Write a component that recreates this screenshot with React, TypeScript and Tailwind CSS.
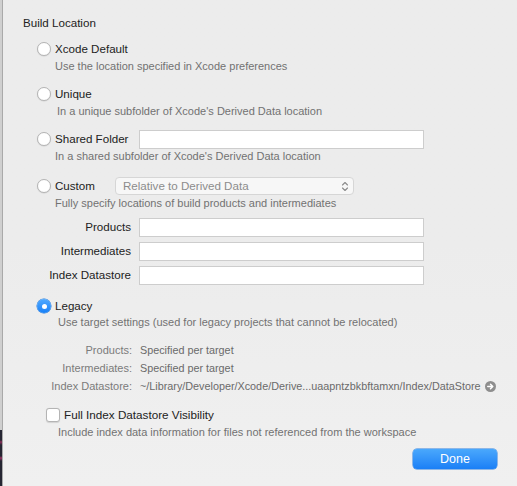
import React from 'react';

const font = { fontFamily: '"Liberation Sans", Arial, sans-serif' };

const Radio = ({ checked = false }: { checked?: boolean }) =>
  checked ? (
    <span className="flex h-[14px] w-[14px] shrink-0 items-center justify-center rounded-full bg-gradient-to-b from-[#4fa9ff] to-[#1580f7] shadow-[0_0_0_0.5px_#1a73d9]">
      <span className="h-[5px] w-[5px] rounded-full bg-white" />
    </span>
  ) : (
    <span className="h-[14px] w-[14px] shrink-0 rounded-full border border-[#b4b4b4] bg-white shadow-[0_0.5px_1px_rgba(0,0,0,0.12)]" />
  );

const Field = () => (
  <div className="h-[19px] w-[285px] border border-[#cdcdcd] bg-white" />
);

const Desc = ({ children, className = 'pl-[52px]' }: { children: React.ReactNode; className?: string }) => (
  <div className={`flex h-[14px] items-center ${className} text-[11px] text-[#727272]`}>{children}</div>
);

const RadioRow = ({ label, checked, children }: { label: string; checked?: boolean; children?: React.ReactNode }) => (
  <div className="flex h-[20px] items-center pl-[34px]">
    <Radio checked={checked} />
    <span className="ml-[4px] text-[11.6px] text-[#222]">{label}</span>
    {children}
  </div>
);

const PathRow = ({ label }: { label: string }) => (
  <div className="flex h-[20px] items-center">
    <span className="w-[128px] text-right text-[11.6px] text-[#222]">{label}</span>
    <span className="ml-[8px]">
      <Field />
    </span>
  </div>
);

const InfoRow = ({ label, value, arrow }: { label: string; value: string; arrow?: boolean }) => (
  <div className="flex h-[18px] items-center">
    <span className="w-[129px] text-right text-[11px] text-[#7b7b7b]">{label}</span>
    <span className="ml-[8px] text-[10.8px] text-[#6a6a6a]">{value}</span>
    {arrow && (
      <svg className="ml-[4px]" width="11" height="11" viewBox="0 0 12 12">
        <circle cx="6" cy="6" r="6" fill="#8e8e8e" />
        <path d="M3 6h5M6 3.5 8.5 6 6 8.5" stroke="#fff" strokeWidth="1.6" fill="none" strokeLinecap="round" strokeLinejoin="round" />
      </svg>
    )}
  </div>
);

export default function App() {
  return (
    <div className="flex h-[486px] w-[517px] overflow-hidden" style={font}>
      <div className="flex w-[3px] flex-col border-r border-[#a9a9a9]">
        <div className="flex-1 bg-[#cfcfcf]" />
        <div className="h-[56px] bg-[#262633] bg-[linear-gradient(180deg,#262633_0,#262633_10px,#8a2f5a_12px,#262633_15px,#262633_26px,#9a3364_28px,#262633_31px)]" />
      </div>
      <div className="flex flex-1 flex-col bg-gradient-to-b from-[#ececec] via-[#ececec] to-[#f0f0f0] pt-[15px]">
        <div className="flex h-[16px] items-center pl-[20px] text-[11.6px] text-[#222]">Build Location</div>

        <div className="mt-[8px]">
          <RadioRow label="Xcode Default" />
          <Desc>Use the location specified in Xcode preferences</Desc>
        </div>

        <div className="mt-[11px]">
          <RadioRow label="Unique" />
          <Desc className="pl-[54px]">In a unique subfolder of Xcode's Derived Data location</Desc>
        </div>

        <div className="mt-[11px]">
          <RadioRow label="Shared Folder">
            <span className="ml-[11px]">
              <Field />
            </span>
          </RadioRow>
          <Desc>In a shared subfolder of Xcode's Derived Data location</Desc>
        </div>

        <div className="mt-[13px]">
          <RadioRow label="Custom">
            <div className="ml-[20px] flex h-[18px] w-[239px] items-center justify-between rounded-[4px] border border-[#d6d6d6] bg-[#f7f7f7] pl-[7px] pr-[4px] text-[11.6px] text-[#8c8c8c]">
              <span>Relative to Derived Data</span>
              <svg width="8" height="11" viewBox="0 0 8 11">
                <path d="M1.5 4 4 1.5 6.5 4M1.5 7 4 9.5 6.5 7" stroke="#8a8a8a" strokeWidth="1.1" fill="none" strokeLinecap="round" strokeLinejoin="round" />
              </svg>
            </div>
          </RadioRow>
          <Desc>Fully specify locations of build products and intermediates</Desc>
        </div>

        <div className="mt-[7px] flex flex-col gap-[4px]">
          <PathRow label="Products" />
          <PathRow label="Intermediates" />
          <PathRow label="Index Datastore" />
        </div>

        <div className="mt-[11px]">
          <RadioRow label="Legacy" checked />
          <Desc className="pl-[55px] -mt-[1px]">Use target settings (used for legacy projects that cannot be relocated)</Desc>
        </div>

        <div className="mt-[12px]">
          <InfoRow label="Products:" value="Specified per target" />
          <InfoRow label="Intermediates:" value="Specified per target" />
          <InfoRow label="Index Datastore:" value="~/Library/Developer/Xcode/Derive...uaapntzbkbftamxn/Index/DataStore" arrow />
        </div>

        <div className="mt-[10px]">
          <div className="flex h-[20px] items-center pl-[43px]">
            <span className="h-[14px] w-[14px] rounded-[3px] border border-[#b4b4b4] bg-white shadow-[0_0.5px_1px_rgba(0,0,0,0.12)]" />
            <span className="ml-[4px] text-[11.7px] text-[#222]">Full Index Datastore Visibility</span>
          </div>
          <Desc className="pl-[55px]">Include index data information for files not referenced from the workspace</Desc>
        </div>

        <div className="mt-[10px] flex justify-end pr-[20px]">
          <button className="flex h-[20px] w-[84px] items-center justify-center rounded-[4px] bg-gradient-to-b from-[#4aa8fc] to-[#1a7ff6] text-[12.5px] text-white shadow-[0_0_0_0.5px_#2a7fe0]">
            Done
          </button>
        </div>
      </div>
    </div>
  );
}
